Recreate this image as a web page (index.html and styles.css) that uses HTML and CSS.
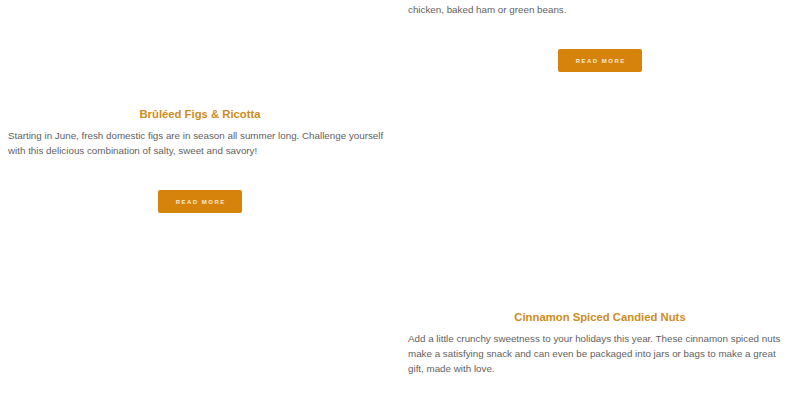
FILE: index.html
```html
<!DOCTYPE html>
<html lang="en">
  <head>
    <meta charset="UTF-8" />
    <meta name="viewport" content="width=device-width, initial-scale=1.0" />
    <title>Recipes</title>
    <link rel="stylesheet" href="styles.css">
  </head>
  <body>
    <div class="feed">
      <div class="feed-col">
        <article class="card">
          <div class="card-media card-media--short"></div>
          <h3 class="card-title">Brûléed Figs &amp; Ricotta</h3>
          <p class="card-text">
            Starting in June, fresh domestic figs are in season all summer long.
            Challenge yourself with this delicious combination of salty, sweet
            and savory!
          </p>
          <a class="card-btn" href="#">Read More</a>
        </article>
      </div>

      <div class="feed-col">
        <article class="card">
          <p class="card-text">
            A sweet and tangy cranberry glaze that pairs perfectly with roasted
            turkey, grilled chicken, baked ham or green beans.
          </p>
          <a class="card-btn" href="#">Read More</a>
        </article>

        <article class="card">
          <div class="card-media"></div>
          <h3 class="card-title">Cinnamon Spiced Candied Nuts</h3>
          <p class="card-text">
            Add a little crunchy sweetness to your holidays this year. These
            cinnamon spiced nuts make a satisfying snack and can even be packaged
            into jars or bags to make a great gift, made with love.
          </p>
          <a class="card-btn" href="#">Read More</a>
        </article>
      </div>
    </div>
  </body>
</html>
```

FILE: styles.css
```css
html,
body {
  margin: 0;
  padding: 0;
  height: 100%;
  overflow: hidden;
  background-color: #fff;
  font-family: "Liberation Sans", Arial, sans-serif;
}

/* page is shown scrolled a little, so the feed starts above the fold */
.feed {
  display: grid;
  grid-template-columns: 1fr 1fr;
  column-gap: 16px;
  align-items: start;
  padding: 0 8px;
  margin-top: -13.5px;
}

.feed-col {
  display: flex;
  flex-direction: column;
}

.card {
  display: flex;
  flex-direction: column;
  align-items: center;
}

.card-media {
  align-self: stretch;
  height: 215px;
  background-color: #fff;
}

.card-media--short {
  height: 107.5px;
}

.card-title {
  margin: 12.5px 0 6px;
  font-size: 11.3px;
  line-height: 15px;
  font-weight: bold;
  text-align: center;
  color: #cf8c1c;
}

.card-text {
  align-self: stretch;
  margin: 0;
  font-size: 9.8px;
  line-height: 15px;
  color: #5f5f5f;
}

.card-btn {
  display: flex;
  justify-content: center;
  align-items: center;
  height: 23px;
  padding: 0 16.5px 0 18px;
  margin: 32.5px 0 10px;
  border-radius: 2px;
  background-color: #d6830c;
  color: #f7ead2;
  font-size: 6px;
  font-weight: bold;
  letter-spacing: 1.5px;
  text-transform: uppercase;
  text-decoration: none;
}
```
